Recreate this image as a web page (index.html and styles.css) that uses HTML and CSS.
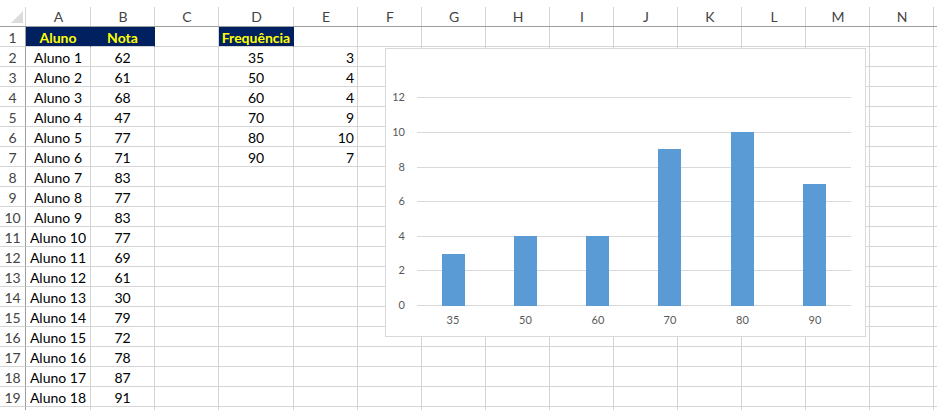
FILE: index.html
```html
<!DOCTYPE html>
<html lang="pt">
<head>
    <meta charset="UTF-8">
    <title>Frequência das notas</title>
    <link rel="stylesheet" href="styles.css">
</head>
<body>
    <div class="wrap">
        <div class="sheet">
            <!-- column headers -->
            <div class="col corner"><span class="tri"></span></div>
            <div class="col">A</div><div class="col">B</div><div class="col">C</div><div class="col">D</div><div class="col">E</div><div class="col">F</div><div class="col">G</div><div class="col">H</div><div class="col">I</div><div class="col">J</div><div class="col">K</div><div class="col">L</div><div class="col">M</div><div class="col">N</div><div class="col"></div>

            <div class="num">1</div><div class="hd">Aluno</div><div class="hd">Nota</div><div></div><div class="hd">Frequência</div><div></div><div></div><div></div><div></div><div></div><div></div><div></div><div></div><div></div><div></div><div></div>
            <div class="num">2</div><div>Aluno 1</div><div>62</div><div></div><div>35</div><div class="r">3</div><div></div><div></div><div></div><div></div><div></div><div></div><div></div><div></div><div></div><div></div>
            <div class="num">3</div><div>Aluno 2</div><div>61</div><div></div><div>50</div><div class="r">4</div><div></div><div></div><div></div><div></div><div></div><div></div><div></div><div></div><div></div><div></div>
            <div class="num">4</div><div>Aluno 3</div><div>68</div><div></div><div>60</div><div class="r">4</div><div></div><div></div><div></div><div></div><div></div><div></div><div></div><div></div><div></div><div></div>
            <div class="num">5</div><div>Aluno 4</div><div>47</div><div></div><div>70</div><div class="r">9</div><div></div><div></div><div></div><div></div><div></div><div></div><div></div><div></div><div></div><div></div>
            <div class="num">6</div><div>Aluno 5</div><div>77</div><div></div><div>80</div><div class="r">10</div><div></div><div></div><div></div><div></div><div></div><div></div><div></div><div></div><div></div><div></div>
            <div class="num">7</div><div>Aluno 6</div><div>71</div><div></div><div>90</div><div class="r">7</div><div></div><div></div><div></div><div></div><div></div><div></div><div></div><div></div><div></div><div></div>
            <div class="num">8</div><div>Aluno 7</div><div>83</div><div></div><div></div><div></div><div></div><div></div><div></div><div></div><div></div><div></div><div></div><div></div><div></div><div></div>
            <div class="num">9</div><div>Aluno 8</div><div>77</div><div></div><div></div><div></div><div></div><div></div><div></div><div></div><div></div><div></div><div></div><div></div><div></div><div></div>
            <div class="num">10</div><div>Aluno 9</div><div>83</div><div></div><div></div><div></div><div></div><div></div><div></div><div></div><div></div><div></div><div></div><div></div><div></div><div></div>
            <div class="num">11</div><div>Aluno 10</div><div>77</div><div></div><div></div><div></div><div></div><div></div><div></div><div></div><div></div><div></div><div></div><div></div><div></div><div></div>
            <div class="num">12</div><div>Aluno 11</div><div>69</div><div></div><div></div><div></div><div></div><div></div><div></div><div></div><div></div><div></div><div></div><div></div><div></div><div></div>
            <div class="num">13</div><div>Aluno 12</div><div>61</div><div></div><div></div><div></div><div></div><div></div><div></div><div></div><div></div><div></div><div></div><div></div><div></div><div></div>
            <div class="num">14</div><div>Aluno 13</div><div>30</div><div></div><div></div><div></div><div></div><div></div><div></div><div></div><div></div><div></div><div></div><div></div><div></div><div></div>
            <div class="num">15</div><div>Aluno 14</div><div>79</div><div></div><div></div><div></div><div></div><div></div><div></div><div></div><div></div><div></div><div></div><div></div><div></div><div></div>
            <div class="num">16</div><div>Aluno 15</div><div>72</div><div></div><div></div><div></div><div></div><div></div><div></div><div></div><div></div><div></div><div></div><div></div><div></div><div></div>
            <div class="num">17</div><div>Aluno 16</div><div>78</div><div></div><div></div><div></div><div></div><div></div><div></div><div></div><div></div><div></div><div></div><div></div><div></div><div></div>
            <div class="num">18</div><div>Aluno 17</div><div>87</div><div></div><div></div><div></div><div></div><div></div><div></div><div></div><div></div><div></div><div></div><div></div><div></div><div></div>
            <div class="num">19</div><div>Aluno 18</div><div>91</div><div></div><div></div><div></div><div></div><div></div><div></div><div></div><div></div><div></div><div></div><div></div><div></div><div></div>
            <div class="num"></div><div></div><div></div><div></div><div></div><div></div><div></div><div></div><div></div><div></div><div></div><div></div><div></div><div></div><div></div><div></div>
        </div>

        <!-- chart floating over the sheet -->
        <div class="chart">
            <svg width="479" height="287" viewBox="0 0 479 287">
                <g class="grid">
                    <line x1="31" x2="465" y1="48.5" y2="48.5"/>
                    <line x1="31" x2="465" y1="83.5" y2="83.5"/>
                    <line x1="31" x2="465" y1="118.5" y2="118.5"/>
                    <line x1="31" x2="465" y1="152.5" y2="152.5"/>
                    <line x1="31" x2="465" y1="187.5" y2="187.5"/>
                    <line x1="31" x2="465" y1="221.5" y2="221.5"/>
                    <line x1="31" x2="465" y1="256.5" y2="256.5"/>
                </g>
                <g class="ylab">
                    <text x="19" y="52">12</text>
                    <text x="19" y="87">10</text>
                    <text x="19" y="122">8</text>
                    <text x="19" y="156">6</text>
                    <text x="19" y="191">4</text>
                    <text x="19" y="225">2</text>
                    <text x="19" y="260">0</text>
                </g>
                <g class="bars">
                    <rect x="56" y="205" width="23" height="52"/>
                    <rect x="128" y="187" width="23" height="70"/>
                    <rect x="200" y="187" width="23" height="70"/>
                    <rect x="272" y="100" width="23" height="157"/>
                    <rect x="345" y="83" width="23" height="174"/>
                    <rect x="417" y="135" width="23" height="122"/>
                </g>
                <g class="xlab">
                    <text x="67" y="275">35</text>
                    <text x="139.5" y="275">50</text>
                    <text x="212" y="275">60</text>
                    <text x="284" y="275">70</text>
                    <text x="356.5" y="275">80</text>
                    <text x="429" y="275">90</text>
                </g>
            </svg>
        </div>
    </div>
</body>
</html>
```

FILE: styles.css
```css
body {
    margin: 0;
    background: #fff;
    overflow: hidden;
    font-family: Lato, "Liberation Sans", sans-serif;
    font-size: 14px;
    color: #000;
}
.wrap {
    position: relative;
    width: 937px;
    height: 410px;
    overflow: hidden;
}
.sheet {
    display: grid;
    grid-template-columns: 26px 65px 64px 64px 75px repeat(11, 64px);
    grid-template-rows: 27px;
    grid-auto-rows: 20px;
}
.sheet > div {
    box-sizing: border-box;
    border-right: 1px solid #d4d4d4;
    border-bottom: 1px solid #d4d4d4;
    text-align: center;
    line-height: 19px;
    padding-top: 1px;
    white-space: nowrap;
    overflow: hidden;
}
.sheet > .r {
    text-align: right;
    padding-right: 3px;
}
/* column letters */
.sheet > .col {
    border-right: none;
    border-bottom: 1px solid #9e9e9e;
    padding-top: 7px;
    color: #444;
    background: linear-gradient(#d4d4d4, #d4d4d4) no-repeat right bottom / 1px 19px;
}
.sheet > .corner {
    display: flex;
    justify-content: flex-end;
    align-items: flex-end;
    padding: 0 3px 3px 0;
}
.tri {
    width: 0;
    height: 0;
    border-left: 12px solid transparent;
    border-bottom: 12px solid #dcdcdc;
}
/* row numbers */
.sheet > .num {
    border-right: 1px solid #9e9e9e;
    color: #444;
}
.sheet > .hd {
    background: #002060;
    border-right-color: #002060;
    color: #ffff00;
    font-weight: bold;
}

.chart {
    position: absolute;
    left: 385px;
    top: 48px;
    width: 481px;
    height: 289px;
    box-sizing: border-box;
    border: 1px solid #d9d9d9;
    background: #fff;
}
.chart svg {
    display: block;
}
.grid line {
    stroke: #d9d9d9;
    stroke-width: 1;
}
.bars rect {
    fill: #5b9bd5;
}
.ylab text,
.xlab text {
    font-family: Lato, "Liberation Sans", sans-serif;
    font-size: 11px;
    fill: #595959;
}
.ylab text {
    text-anchor: end;
}
.xlab text {
    text-anchor: middle;
}
```
